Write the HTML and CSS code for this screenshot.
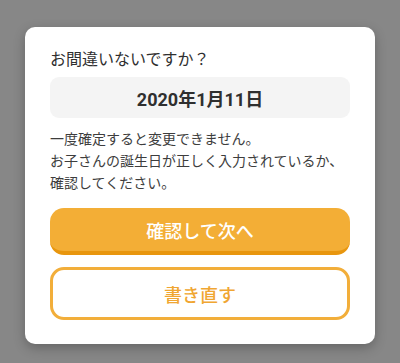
FILE: index.html
```html
<!DOCTYPE html>
<html lang="ja">
<head>
<meta charset="utf-8">
<link rel="stylesheet" href="styles.css">
</head>
<body>
<div class="card">
  <div class="title">お間違いないですか？</div>
  <div class="date">2020年1月11日</div>
  <p class="note">一度確定すると変更できません。<br>お子さんの誕生日が正しく入力されているか、<br>確認してください。</p>
  <button class="btn primary">確認して次へ</button>
  <button class="btn secondary">書き直す</button>
</div>
</body>
</html>
```
FILE: styles.css
```css
* { box-sizing: border-box; }
html, body { margin: 0; padding: 0; }
body {
  width: 400px;
  height: 363px;
  background: #878787;
  font-family: Roboto, "Noto Sans CJK JP", sans-serif;
  color: #333;
  overflow: hidden;
  padding-top: 27px;
  padding-left: 25px;
}
.card {
  width: 350px;
  height: 317px;
  background: #fff;
  border-radius: 10px;
  box-shadow: 0 4px 12px rgba(0,0,0,0.25);
  padding: 21px 25px 0;
  display: flex;
  flex-direction: column;
}
.title {
  font-size: 16px;
  line-height: 24px;
  color: #2f2f2f;
}
.date {
  margin-top: 5px;
  height: 41px;
  background: #f4f4f4;
  border-radius: 9px;
  display: flex;
  align-items: center;
  justify-content: center;
  font-size: 18px;
  font-weight: 700;
  color: #2f2f2f;
}
.note {
  margin: 10px 0 0;
  font-size: 14px;
  line-height: 22px;
  color: #3d3d3d;
}
.btn {
  font-family: inherit;
  width: 300px;
  border-radius: 14px;
  font-size: 18px;
  font-weight: 500;
  display: flex;
  align-items: center;
  justify-content: center;
  padding: 0;
  cursor: pointer;
}
.primary {
  margin-top: 14px;
  height: 47px;
  background: #f3ae36;
  border: none;
  border-bottom: 4px solid #e8960e;
  color: #fff;
}
.secondary {
  margin-top: 12px;
  height: 53px;
  background: #fff;
  border: 3px solid #f2ae3a;
  color: #f0a632;
}
```
